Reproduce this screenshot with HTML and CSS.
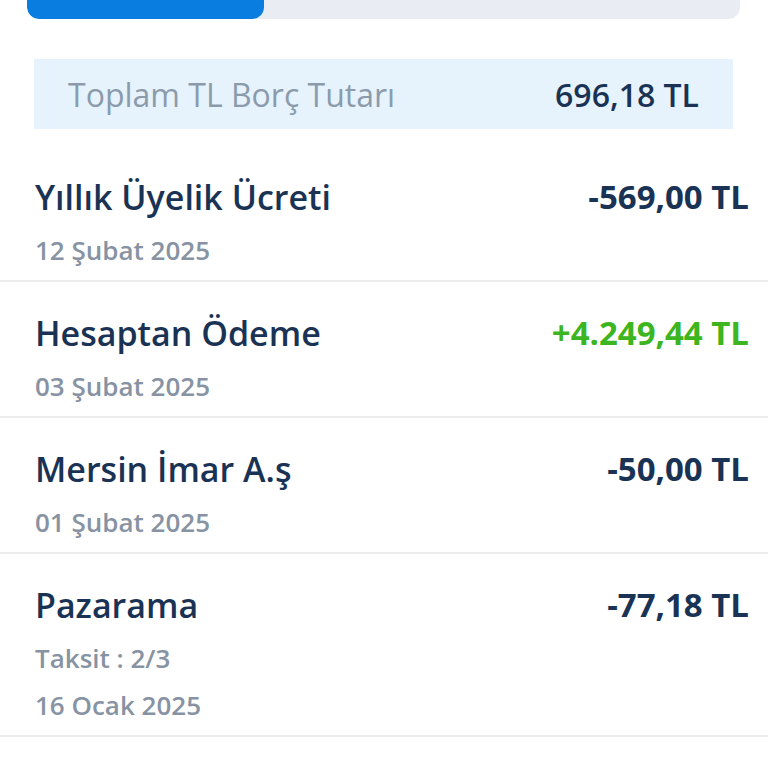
FILE: index.html
```html
<!DOCTYPE html>
<html lang="tr">
<head>
<meta charset="utf-8">
<link rel="stylesheet" href="styles.css">
</head>
<body>
<div class="progress"><div class="progress-fill"></div></div>
<div class="summary">
  <span class="summary-label">Toplam TL Borç Tutarı</span>
  <span class="summary-value">696,18 TL</span>
</div>
<ul class="list">
  <li class="row">
    <div class="info">
      <div class="title">Yıllık Üyelik Ücreti</div>
      <div class="sub">12 Şubat 2025</div>
    </div>
    <div class="amount">-569,00 TL</div>
  </li>
  <li class="row">
    <div class="info">
      <div class="title">Hesaptan Ödeme</div>
      <div class="sub">03 Şubat 2025</div>
    </div>
    <div class="amount positive">+4.249,44 TL</div>
  </li>
  <li class="row">
    <div class="info">
      <div class="title">Mersin İmar A.ş</div>
      <div class="sub">01 Şubat 2025</div>
    </div>
    <div class="amount">-50,00 TL</div>
  </li>
  <li class="row">
    <div class="info">
      <div class="title">Pazarama</div>
      <div class="sub">Taksit : 2/3</div>
      <div class="sub">16 Ocak 2025</div>
    </div>
    <div class="amount">-77,18 TL</div>
  </li>
</ul>
</body>
</html>
```
FILE: styles.css
```css
* { box-sizing: border-box; }
html, body { margin: 0; padding: 0; background: #ffffff; }
body {
  font-family: "Open Sans", "Noto Sans", sans-serif;
  color: #1a3354;
  width: 768px;
  height: 768px;
  overflow: hidden;
}
.progress {
  margin: 0 28px 0 27px;
  height: 19px;
  background: #e9edf3;
  border-radius: 0 0 12px 12px;
  overflow: hidden;
}
.progress-fill {
  width: 237px;
  height: 100%;
  background: #0a7de0;
  border-radius: 0 0 12px 12px;
}
.summary {
  margin: 40px 35px 0 34px;
  height: 70px;
  background: #e6f3fd;
  display: flex;
  align-items: center;
  justify-content: space-between;
  padding: 0 34px 0 34px;
}
.summary-label {
  font-size: 32px;
  font-weight: 400;
  color: #8b9bab;
}
.summary-value {
  font-size: 32px;
  font-weight: 600;
  color: #1a3354;
}
.list {
  list-style: none;
  margin: 17px 0 0 0;
  padding: 0;
}
.row {
  display: flex;
  justify-content: space-between;
  align-items: flex-start;
  padding: 30px 19px 6px 35px;
  border-bottom: 2px solid #ececec;
}
.title {
  font-size: 34px;
  font-weight: 600;
  line-height: 42px;
  color: #1a3354;
}
.sub {
  font-size: 26px;
  font-weight: 600;
  line-height: 47px;
  color: #8793a3;
}
.title + .sub { margin-top: 9px; }
.amount {
  font-size: 33px;
  font-weight: 700;
  line-height: 42px;
  color: #1a3354;
  white-space: nowrap;
}
.amount.positive { color: #3cb521; }
```
